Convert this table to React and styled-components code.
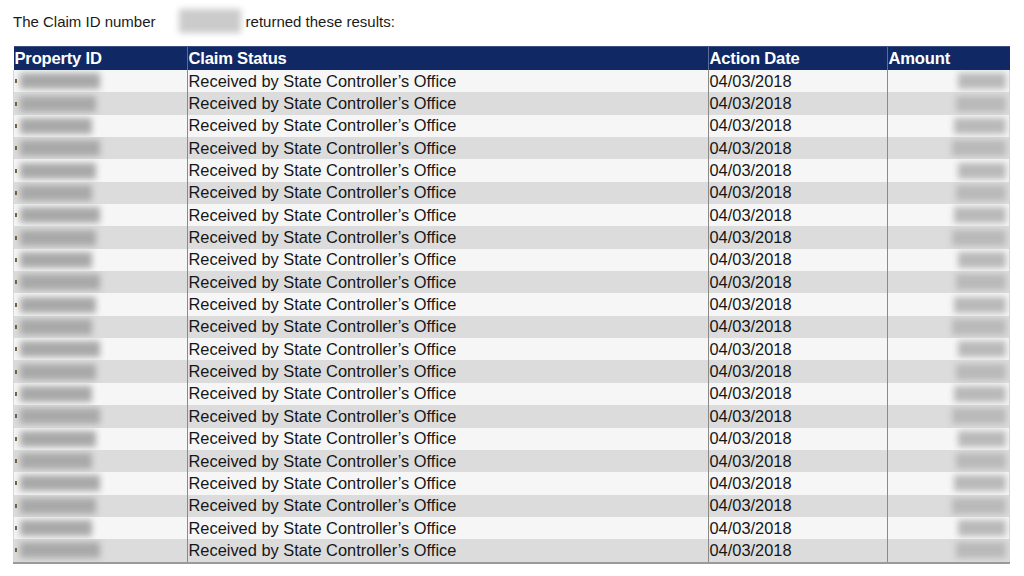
import React from "react";
import styled, { createGlobalStyle } from "styled-components";

const rows = Array.from({ length: 22 }, (_, i) => ({
  status: "Received by State Controller\u2019s Office",
  date: "04/03/2018",
  idWidth: 80 - (i % 3) * 4,
  amountWidth: 48 + (i % 4) * 2,
}));

const App = () => {
  return (
    <>
      <GlobalStyle />
      <StPage>
        <StIntro>
          The Claim ID number<StClaimBlur />returned these results:
        </StIntro>
        <StTable>
          <thead>
            <tr>
              <StTh $w={172}>Property ID</StTh>
              <StTh $w={519}>Claim Status</StTh>
              <StTh $w={177}>Action Date</StTh>
              <StTh>Amount</StTh>
            </tr>
          </thead>
          <tbody>
            {rows.map((r, i) => (
              <StRow key={i} $alt={i % 2 === 1}>
                <StTd>
                  <StIdCell>
                    <StDot />
                    <StBlur style={{ width: r.idWidth }} $tone="#a9a9a9" />
                  </StIdCell>
                </StTd>
                <StTd>{r.status}</StTd>
                <StTd>{r.date}</StTd>
                <StTd>
                  <StAmountCell>
                    <StBlur style={{ width: r.amountWidth }} $tone="#b9b9b9" />
                  </StAmountCell>
                </StTd>
              </StRow>
            ))}
          </tbody>
        </StTable>
      </StPage>
    </>
  );
};

export default App;

const GlobalStyle = createGlobalStyle`
  body {
    margin: 0;
    background: #ffffff;
    font-family: "Liberation Sans", Arial, sans-serif;
  }
`;

const StPage = styled.div`
  width: 1024px;
  height: 576px;
  padding: 7px 0 0 13px;
  box-sizing: border-box;
  background: #ffffff;
  overflow: hidden;
`;

const StIntro = styled.div`
  display: flex;
  align-items: center;
  height: 28px;
  font-size: 15px;
  color: #1a1a1a;
  margin-bottom: 11px;
  white-space: pre;
`;

const StClaimBlur = styled.span`
  display: inline-block;
  width: 62px;
  height: 24px;
  margin: 0 5px 0 23px;
  background: #cbcbcb;
  filter: blur(3px);
`;

const StTable = styled.table`
  width: 997px;
  border-collapse: collapse;
  table-layout: fixed;
  font-size: 16.4px;
  color: #161616;
  box-shadow: 0 2px 0 #9a9a9a;
`;

const StTh = styled.th`
  width: ${(p) => (p.$w ? `${p.$w}px` : "auto")};
  height: 23px;
  padding: 0 0 0 1px;
  background: #102864;
  color: #ffffff;
  font-weight: 700;
  font-size: 16.6px;
  letter-spacing: -0.2px;
  text-align: left;
  border-left: 1px solid #5b6d96;
  border-top: 1px solid #3b4f80;
  &:first-child {
    border-left: none;
  }
`;

const StRow = styled.tr`
  height: 22.35px;
  background: ${(p) => (p.$alt ? "#dcdcdc" : "#f6f6f6")};
`;

const StTd = styled.td`
  padding: 0 0 0 1px;
  border-left: 1px solid #8a8a8a;
  white-space: nowrap;
  overflow: hidden;
  &:first-child {
    border-left: 1px solid #d6d6d6;
    padding: 0;
  }
  &:last-child {
    border-right: 1px solid #d6d6d6;
  }
`;

const StIdCell = styled.div`
  display: flex;
  align-items: center;
  height: 22px;
`;

const StDot = styled.span`
  width: 2px;
  height: 4px;
  margin: 0 3px 0 1px;
  background: #6b5a3c;
  filter: blur(0.4px);
`;

const StAmountCell = styled.div`
  display: flex;
  justify-content: flex-end;
  align-items: center;
  height: 22px;
  padding-right: 3px;
`;

const StBlur = styled.span`
  display: block;
  height: 16px;
  background: ${(p) => p.$tone};
  filter: blur(3px);
`;
